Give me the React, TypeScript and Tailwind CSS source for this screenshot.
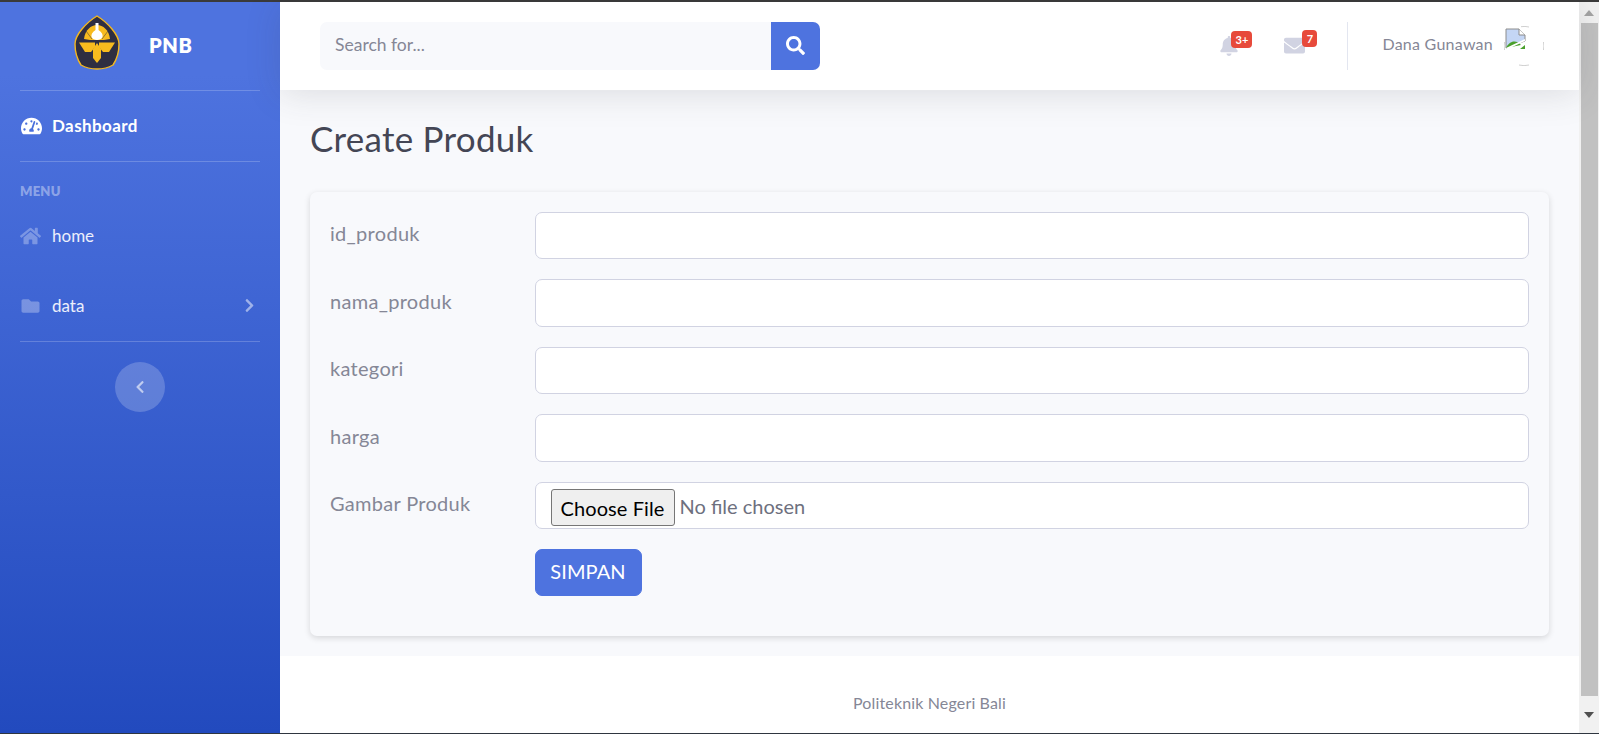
import { FaTachometerAlt, FaHome, FaFolder, FaChevronRight, FaChevronLeft, FaSearch, FaBell, FaEnvelope } from "react-icons/fa";

function Logo() {
  return (
    <svg width="46" height="55" viewBox="0 0 46 55" className="shrink-0 -mt-[8px]">
      <path d="M23 1 C28 4 33 8 38 14 C43 20 45 25 45 29 C45 37 43 44 39 50 C34 53 28 54 23 54 C18 54 12 53 7 50 C3 44 1 37 1 29 C1 25 3 20 8 14 C13 8 18 4 23 1Z" fill="#2f2e41" stroke="#f5b81f" strokeWidth="1.4" />
      <path d="M10 24 C11 15 17 10 23 10 C29 10 35 15 36 24 L30 25 H16Z" fill="#f8bb1e" />
      <path d="M12 16 L18 24 M34 16 L28 24" stroke="#2f2e41" strokeWidth="0.5" fill="none" />
      <path d="M21.5 8 H24.5 V15 C28 17 29 20 28.5 22 C27 26 19 26 17.5 22 C17 20 18 17 21.5 15Z" fill="#ffffff" />
      <path d="M5 27.5 H21 V32 L17 37 H11Z" fill="#f8bb1e" />
      <path d="M41 27.5 H25 V32 L29 37 H35Z" fill="#f8bb1e" />
      <path d="M19 34 L23 28 L27 34 V43 L23 48 L19 43Z" fill="#f8bb1e" />
    </svg>
  );
}

function BrokenImage() {
  return (
    <svg width="40" height="40" viewBox="0 0 40 40" className="block">
      <path d="M17 .7 A19.5 19.5 0 0 1 25 1" fill="none" stroke="#d0d0d0" />
      <path d="M39.5 16 A19.5 19.5 0 0 1 39.5 24" fill="none" stroke="#d0d0d0" />
      <path d="M15 39 A19.5 19.5 0 0 0 25 39" fill="none" stroke="#d0d0d0" />
      <path d="M.5 16 A19.5 19.5 0 0 0 .5 24" fill="none" stroke="#d0d0d0" />
      <path d="M2 3 H15 L21 9 V15 L2 22Z" fill="#c4d6f5" stroke="#8c8c8c" strokeWidth="1" />
      <path d="M15 3 V9 H21" fill="#ffffff" stroke="#8c8c8c" strokeWidth="1" />
      <path d="M2 22 C5 15 12 13 17 19 L2 22Z" fill="#4aa02c" />
      <path d="M2 22 L21 13 V15 L4 23Z" fill="#ffffff" />
      <path d="M2 23 H16 L21 19 V23Z" fill="#4aa02c" />
    </svg>
  );
}

function Field({ label, children }: { label: string; children?: React.ReactNode }) {
  return (
    <div className="flex mb-[20px]">
      <label className="w-[204.5px] shrink-0 pt-[6.5px] leading-[30px] text-[20px] tracking-[0.3px] text-[#858796]">{label}</label>
      <div className="flex-1">
        {children ?? (
          <input className="block w-full h-[47.5px] bg-white border border-[#d1d3e2] rounded-[7px] outline-none px-[15px] text-[20px]" />
        )}
      </div>
    </div>
  );
}

export default function App() {
  return (
    <div className="h-[734px] w-full overflow-hidden flex flex-col bg-white font-['Lato','Noto_Sans',sans-serif] text-[#858796]">
      <div className="h-[2px] shrink-0 bg-[#3a3a3a]" />
      <div className="flex-1 flex min-h-0">
        <aside className="w-[280px] shrink-0 flex flex-col bg-[linear-gradient(180deg,#4e73df_10%,#224abe_100%)] text-white">
          <div className="h-[88px] shrink-0 flex items-center pl-[74px] gap-[29px]">
            <Logo />
            <span className="text-[20px] font-extrabold tracking-[0.6px] -mt-[2px]">PNB</span>
          </div>
          <div className="mx-[20px] h-px bg-white/20" />
          <div className="h-[70px] flex items-center pl-[21px] pr-[20px] gap-[10px] text-[17px] font-bold tracking-[0.4px]">
            <FaTachometerAlt className="text-[20px] w-[21px]" />
            <span>Dashboard</span>
          </div>
          <div className="mx-[20px] h-px bg-white/20" />
          <div className="h-[39px] pt-[21px] px-[20px] text-[13px] leading-[16px] font-extrabold uppercase tracking-[0.2px] text-white/40">Menu</div>
          <div className="h-[70px] flex items-center px-[20px] gap-[11px] text-[17px]">
            <FaHome className="text-[20px] w-[21px] text-white/30" />
            <span className="text-white/90">home</span>
          </div>
          <div className="h-[69px] mb-[1px] flex items-center px-[20px] gap-[11px] text-[17px]">
            <FaFolder className="text-[18px] w-[21px] text-white/30" />
            <span className="text-white/90 flex-1">data</span>
            <FaChevronRight className="text-[15px] text-white/50 mr-[3px]" />
          </div>
          <div className="mx-[20px] h-px bg-white/20" />
          <button className="self-center mt-[20px] w-[50px] h-[50px] rounded-full bg-white/20 flex items-center justify-center text-white/60">
            <FaChevronLeft className="text-[14px]" />
          </button>
        </aside>

        <div className="flex-1 min-w-0 flex flex-col">
          <header className="h-[87.5px] shrink-0 relative z-10 bg-white shadow-[0_3.75px_35px_rgba(58,59,69,0.15)] flex items-center pl-[40px] pr-[35px]">
            <div className="flex w-[500px] h-[47.5px]">
              <input
                placeholder="Search for..."
                className="flex-1 min-w-0 bg-[#f8f9fc] rounded-l-[7px] outline-none px-[15px] pb-[2px] text-[17.5px] placeholder:text-[#858796]"
              />
              <button className="w-[49px] bg-[#4e73df] rounded-r-[7px] flex items-center justify-center text-white">
                <FaSearch className="text-[19px]" />
              </button>
            </div>
            <div className="flex-1" />
            <div className="relative w-[18px] mr-[47px]">
              <FaBell className="text-[20px] text-[#d1d3e2]" />
              <span className="absolute left-[12px] -top-[5px] h-[17px] w-[21px] rounded-[4px] bg-[#e74a3b] text-white text-[11px] font-bold leading-[17px] text-center">3+</span>
            </div>
            <div className="relative w-[21px] mr-[42px]">
              <FaEnvelope className="text-[21px] text-[#d1d3e2]" />
              <span className="absolute left-[18px] -top-[5px] h-[17px] w-[15px] rounded-[4px] bg-[#e74a3b] text-white text-[11px] font-bold leading-[17px] text-center">7</span>
            </div>
            <div className="w-px h-[48px] bg-[#e3e6f0] mr-[34px]" />
            <span className="text-[16px] tracking-[0.25px] text-[#858796] mr-[11px] -mt-[3px]">Dana Gunawan</span>
            <BrokenImage />
          </header>

          <main className="bg-[#f8f9fc] px-[30px] pt-[28px] pb-[20px]">
            <h1 className="text-[35px] leading-[41px] font-normal tracking-[0.25px] text-[#444655] mb-[33px]">Create Produk</h1>
            <div className="bg-[#f8f9fc] rounded-[7px] shadow-[0_2px_6px_rgba(0,0,0,0.14)] px-[20px] pt-[20px] pb-[19.5px]">
              <Field label="id_produk" />
              <Field label="nama_produk" />
              <Field label="kategori" />
              <Field label="harga" />
              <Field label="Gambar Produk">
                <div className="w-full h-[47.5px] bg-white border border-[#d1d3e2] rounded-[7px] flex items-center pl-[15px] text-[20px]">
                  <button className="h-[37px] mt-[5px] px-[9px] tracking-[0.1px] bg-[#efefef] border border-[#767676] rounded-[3px] text-black">Choose File</button>
                  <span className="ml-[5px] mt-[2px] text-[#6e707e]">No file chosen</span>
                </div>
              </Field>
              <div className="flex mb-[20px]">
                <div className="w-[204.5px] shrink-0" />
                <button className="h-[47px] w-[107px] pb-[3px] tracking-[0.1px] bg-[#4e73df] border border-[#4e73df] rounded-[7px] text-white text-[20px]">SIMPAN</button>
              </div>
            </div>
          </main>

          <footer className="flex-1 bg-white flex justify-center pt-[37px] text-[16px] leading-[20px] tracking-[0.15px] text-[#858796]">Politeknik Negeri Bali</footer>
        </div>

        <div className="w-[20px] shrink-0 bg-[#f1f1f1] flex flex-col items-end">
          <div className="h-[21px] w-full flex items-center justify-center">
            <svg width="10" height="6" viewBox="0 0 10 6"><path d="M5 0 L10 6 H0Z" fill="#a3a3a3" /></svg>
          </div>
          <div className="w-[17px] mr-[1px] h-[673px] bg-[#c1c1c1]" />
          <div className="flex-1 w-full flex items-center justify-center">
            <svg width="10" height="6" viewBox="0 0 10 6"><path d="M0 0 H10 L5 6Z" fill="#505050" /></svg>
          </div>
        </div>
      </div>
      <div className="h-px shrink-0 bg-[#2f3640]" />
    </div>
  );
}
